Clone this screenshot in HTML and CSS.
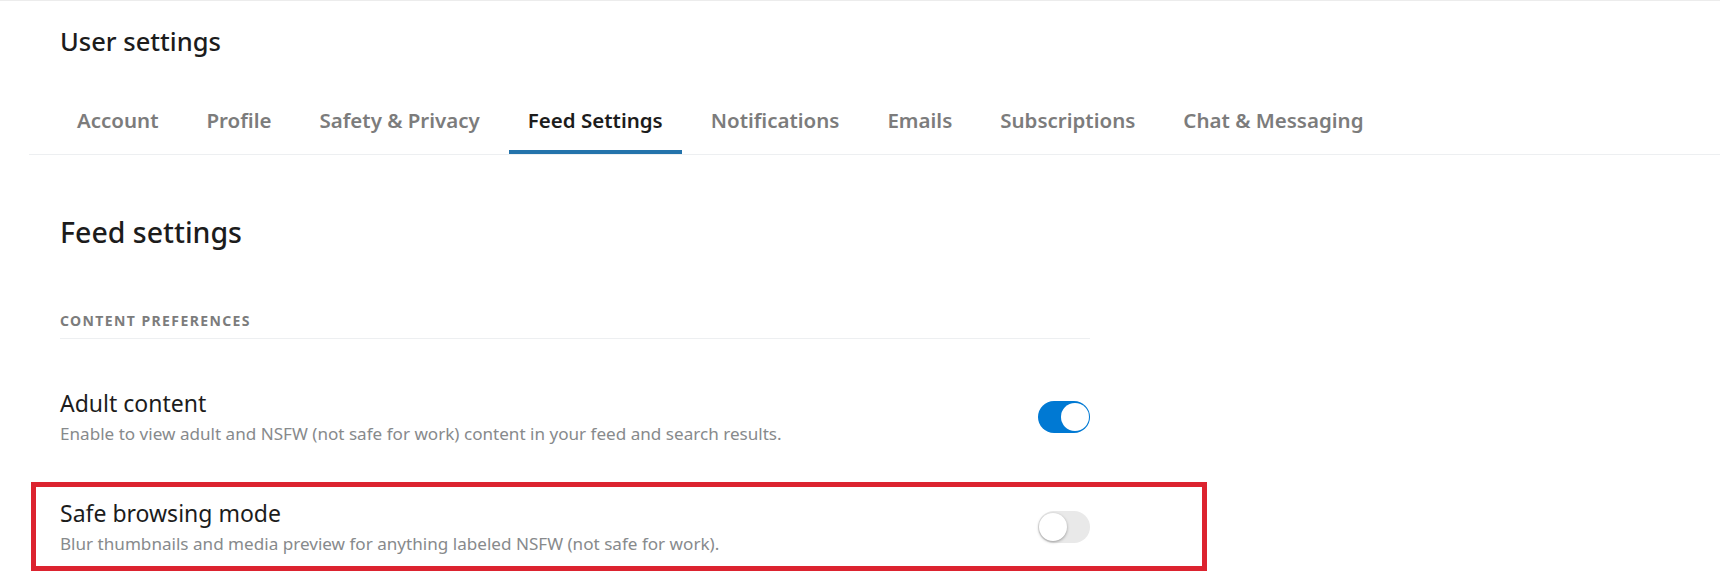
FILE: index.html
```html
<!DOCTYPE html>
<html lang="en">
<head>
  <meta charset="UTF-8" />
  <title>User settings</title>
  <meta name="viewport" content="width=device-width, initial-scale=1.0" />
  <link rel="stylesheet" href="styles.css">
</head>
<body>

  <header class="usrset-header">
    <h1 class="usrset-title">User settings</h1>
    <nav class="usrset-tabs" role="tablist">
      <a class="usrset-tab" href="#">Account</a>
      <a class="usrset-tab" href="#">Profile</a>
      <a class="usrset-tab" href="#">Safety &amp; Privacy</a>
      <a class="usrset-tab active" href="#">Feed Settings</a>
      <a class="usrset-tab" href="#">Notifications</a>
      <a class="usrset-tab" href="#">Emails</a>
      <a class="usrset-tab" href="#">Subscriptions</a>
      <a class="usrset-tab" href="#">Chat &amp; Messaging</a>
    </nav>
  </header>

  <main class="usrset-main">
    <h2 class="usrset-section-title">Feed settings</h2>
    <h3 class="usrset-group">Content preferences</h3>

    <div class="usrset-row">
      <div class="usrset-text">
        <div class="usrset-label">Adult content</div>
        <div class="usrset-desc">Enable to view adult and NSFW (not safe for work) content in your feed and search results.</div>
      </div>
      <button class="usrset-toggle on" role="switch" aria-checked="true"><span class="usrset-knob"></span></button>
    </div>

    <!-- highlighted row -->
    <div class="usrset-row marked">
      <div class="usrset-text">
        <div class="usrset-label">Safe browsing mode</div>
        <div class="usrset-desc">Blur thumbnails and media preview for anything labeled NSFW (not safe for work).</div>
      </div>
      <button class="usrset-toggle" role="switch" aria-checked="false"><span class="usrset-knob"></span></button>
    </div>
  </main>

  <script>
    document.querySelectorAll(".usrset-toggle").forEach(btn => {
      btn.addEventListener("click", () => {
        const on = btn.classList.toggle("on");
        btn.setAttribute("aria-checked", on);
      });
    });
  </script>
</body>
</html>
```

FILE: styles.css
```css
:root {
  --usrset-fg: #1c1c1c;
  --usrset-muted: #7c7c7c;
  --usrset-desc: #878a8c;
  --usrset-line: #edeff1;
  --usrset-blue: #0079d3;
  --usrset-tab-blue: #2473ab;
}

body {
  font-family: "Noto Sans", Roboto, sans-serif;
  margin: 0;
  background: #fff;
  color: var(--usrset-fg);
  border-top: 1px solid #ececec;
}

.usrset-header {
  margin-left: 29px;
  border-bottom: 1px solid var(--usrset-line);
}

.usrset-title {
  margin: 0;
  padding: 22px 0 0 31px;
  font-size: 25.5px;
  font-weight: 500;
  line-height: 36px;
}

.usrset-tabs {
  display: flex;
  gap: 10px;
  padding: 47px 0 0 29px;
}

.usrset-tab {
  padding: 0 19px;
  height: 48px;
  font-size: 20.5px;
  font-weight: 600;
  line-height: 28px;
  color: var(--usrset-muted);
  text-decoration: none;
  border-bottom: 4px solid transparent;
  box-sizing: border-box;
}

.usrset-tab.active {
  color: var(--usrset-fg);
  border-bottom-color: var(--usrset-tab-blue);
}

.usrset-main {
  width: 1030px;
  padding-left: 60px;
}

.usrset-section-title {
  margin: 0;
  padding-top: 57px;
  font-size: 28.5px;
  font-weight: 500;
  line-height: 40px;
}

.usrset-group {
  margin: 59px 0 0;
  padding-bottom: 7px;
  font-size: 14px;
  font-weight: 700;
  line-height: 20px;
  letter-spacing: 1.4px;
  text-transform: uppercase;
  color: var(--usrset-muted);
  border-bottom: 1px solid var(--usrset-line);
}

.usrset-row {
  display: flex;
  align-items: center;
  justify-content: space-between;
  min-height: 79px;
  margin-top: 38px;
}

.usrset-row.marked {
  margin: 26px -117px 0 -29px;
  padding: 0 112px 0 24px;
  border: 5px solid #dc232f;
}

.usrset-label {
  font-size: 23px;
  line-height: 28px;
}

.usrset-desc {
  margin-top: 6px;
  font-size: 17.1px;
  line-height: 22px;
  color: var(--usrset-desc);
}

.usrset-toggle {
  position: relative;
  width: 52px;
  height: 32px;
  padding: 0;
  border: none;
  border-radius: 16px;
  background: #e9e9e9;
  cursor: pointer;
}

.usrset-toggle.on {
  background: var(--usrset-blue);
}

.usrset-knob {
  position: absolute;
  top: 2px;
  left: 1px;
  width: 28px;
  height: 28px;
  border-radius: 50%;
  background: #fff;
  box-shadow: 0 1px 3px rgba(0,0,0,0.35);
  transition: left 0.15s ease;
}

.usrset-toggle.on .usrset-knob {
  left: 23px;
  box-shadow: none;
}
```
